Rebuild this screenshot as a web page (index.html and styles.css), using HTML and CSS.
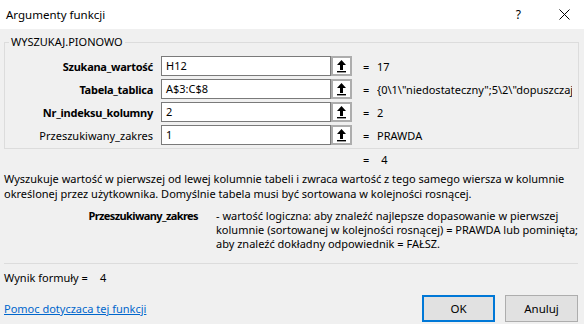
FILE: index.html
```html
<!DOCTYPE html>
<html lang="pl">
<head>
  <meta charset="UTF-8">
  <title>Argumenty funkcji</title>
  <link rel="stylesheet" href="styles.css">
</head>
<body>
  <div class="dialog">
    <div class="titlebar">
      <span class="title">Argumenty funkcji</span>
      <span class="help-btn">?</span>
      <svg class="close-btn" width="11" height="11" viewBox="0 0 11 11">
        <path d="M0.5 0.5 L10.5 10.5 M10.5 0.5 L0.5 10.5" stroke="#000" stroke-width="1" fill="none"/>
      </svg>
    </div>

    <fieldset class="group">
      <legend>WYSZUKAJ.PIONOWO</legend>
      <div class="args">
        <label class="arg-name req">Szukana_wartość</label>
        <div class="ref-input">H12</div>
        <div class="ref-btn"><svg width="11" height="14" viewBox="0 0 11 14"><path d="M5.5 1 L10 6 L7 6 L7 11 L4 11 L4 6 L1 6 Z" fill="#000"/><rect x="1" y="12" width="9" height="1.4" fill="#000"/></svg></div>
        <span class="eq">=</span>
        <span class="arg-val">17</span>

        <label class="arg-name req">Tabela_tablica</label>
        <div class="ref-input">A$3:C$8</div>
        <div class="ref-btn"><svg width="11" height="14" viewBox="0 0 11 14"><path d="M5.5 1 L10 6 L7 6 L7 11 L4 11 L4 6 L1 6 Z" fill="#000"/><rect x="1" y="12" width="9" height="1.4" fill="#000"/></svg></div>
        <span class="eq">=</span>
        <span class="arg-val">{0\1\"niedostateczny";5\2\"dopuszczaj</span>

        <label class="arg-name req">Nr_indeksu_kolumny</label>
        <div class="ref-input">2</div>
        <div class="ref-btn"><svg width="11" height="14" viewBox="0 0 11 14"><path d="M5.5 1 L10 6 L7 6 L7 11 L4 11 L4 6 L1 6 Z" fill="#000"/><rect x="1" y="12" width="9" height="1.4" fill="#000"/></svg></div>
        <span class="eq">=</span>
        <span class="arg-val">2</span>

        <label class="arg-name">Przeszukiwany_zakres</label>
        <div class="ref-input">1</div>
        <div class="ref-btn"><svg width="11" height="14" viewBox="0 0 11 14"><path d="M5.5 1 L10 6 L7 6 L7 11 L4 11 L4 6 L1 6 Z" fill="#000"/><rect x="1" y="12" width="9" height="1.4" fill="#000"/></svg></div>
        <span class="eq">=</span>
        <span class="arg-val">PRAWDA</span>
      </div>
    </fieldset>

    <div class="result"><span>=</span><span>4</span></div>

    <p class="desc">Wyszukuje wartość w pierwszej od lewej kolumnie tabeli i zwraca wartość z tego samego wiersza w kolumnie<br>określonej przez użytkownika. Domyślnie tabela musi być sortowana w kolejności rosnącej.</p>

    <div class="arg-help">
      <span class="help-name">Przeszukiwany_zakres</span>
      <span class="help-text">- wartość logiczna: aby znaleźć najlepsze dopasowanie w pierwszej<br>kolumnie (sortowanej w kolejności rosnącej) = PRAWDA lub pominięta;<br>aby znaleźć dokładny odpowiednik = FAŁSZ.</span>
    </div>

    <hr class="sep">

    <div class="formula">Wynik formuły =<span class="formula-val">4</span></div>

    <div class="footer">
      <a href="#" class="help-link">Pomoc dotyczaca tej funkcji</a>
      <button class="btn btn-default">OK</button>
      <button class="btn">Anuluj</button>
    </div>
  </div>
</body>
</html>
```

FILE: styles.css
```css
body {
  margin: 0;
  font-family: "Noto Sans", "Liberation Sans", sans-serif;
  font-size: 11px;
  color: #000;
}
.dialog {
  width: 584px;
  height: 324px;
  background: #f0f0f0;
  overflow: hidden;
}
.titlebar {
  height: 29px;
  background: #fff;
  display: flex;
  align-items: center;
  padding-left: 6px;
}
.title {
  font-size: 11.5px;
  margin-right: auto;
}
.help-btn {
  font-size: 12px;
  margin-right: 38px;
}
.close-btn {
  margin-right: 14px;
}
.group {
  margin: 5px 5px 0 4px;
  padding: 6px 0 3px 0;
  border: 1px solid #dcdcdc;
}
.group legend {
  margin-left: 4px;
  padding: 0 2px;
  line-height: 16px;
}
.args {
  display: grid;
  grid-template-columns: 156px 170px 21px 25px 195px;
  grid-auto-rows: 20px;
  row-gap: 3px;
  align-items: center;
}
.arg-name {
  text-align: right;
  padding-right: 8px;
  white-space: nowrap;
}
.arg-name.req {
  font-weight: bold;
  letter-spacing: -0.25px;
}
.ref-input {
  height: 20px;
  box-sizing: border-box;
  border: 1px solid #7a7a7a;
  background: #fff;
  padding-left: 4px;
  line-height: 18px;
}
.ref-btn {
  height: 20px;
  box-sizing: border-box;
  border: 2px solid #adadad;
  background: #fff;
  display: flex;
  align-items: center;
  justify-content: center;
}
.eq {
  padding-left: 11px;
}
.arg-val {
  white-space: nowrap;
  overflow: hidden;
}
.result {
  margin-top: 3px;
  height: 16px;
  line-height: 16px;
  display: flex;
  gap: 12px;
  padding-left: 363px;
}
.desc {
  margin: 3px 0 0 4px;
  line-height: 15px;
  white-space: nowrap;
}
.arg-help {
  margin-top: 8px;
  display: grid;
  grid-template-columns: 194px auto;
  column-gap: 18px;
  padding-left: 4px;
  line-height: 14px;
}
.help-name {
  font-weight: bold;
  text-align: right;
  letter-spacing: -0.6px;
}
.help-text {
  white-space: nowrap;
}
.sep {
  margin: 12px 6px 0 4px;
  border: none;
  border-top: 1px solid #dcdcdc;
}
.formula {
  margin: 6px 0 0 4px;
  line-height: 15px;
}
.formula-val {
  margin-left: 12px;
}
.footer {
  margin-top: 10px;
  display: flex;
  align-items: center;
  padding: 0 6px 0 4px;
}
.help-link {
  color: #0066cc;
  margin-right: auto;
}
.btn {
  width: 73px;
  height: 27px;
  box-sizing: border-box;
  background: #e1e1e1;
  border: 1px solid #adadad;
  font-family: inherit;
  font-size: 11.5px;
  margin-left: 10px;
  padding: 0;
}
.btn-default {
  border: 2px solid #0078d7;
}
```
